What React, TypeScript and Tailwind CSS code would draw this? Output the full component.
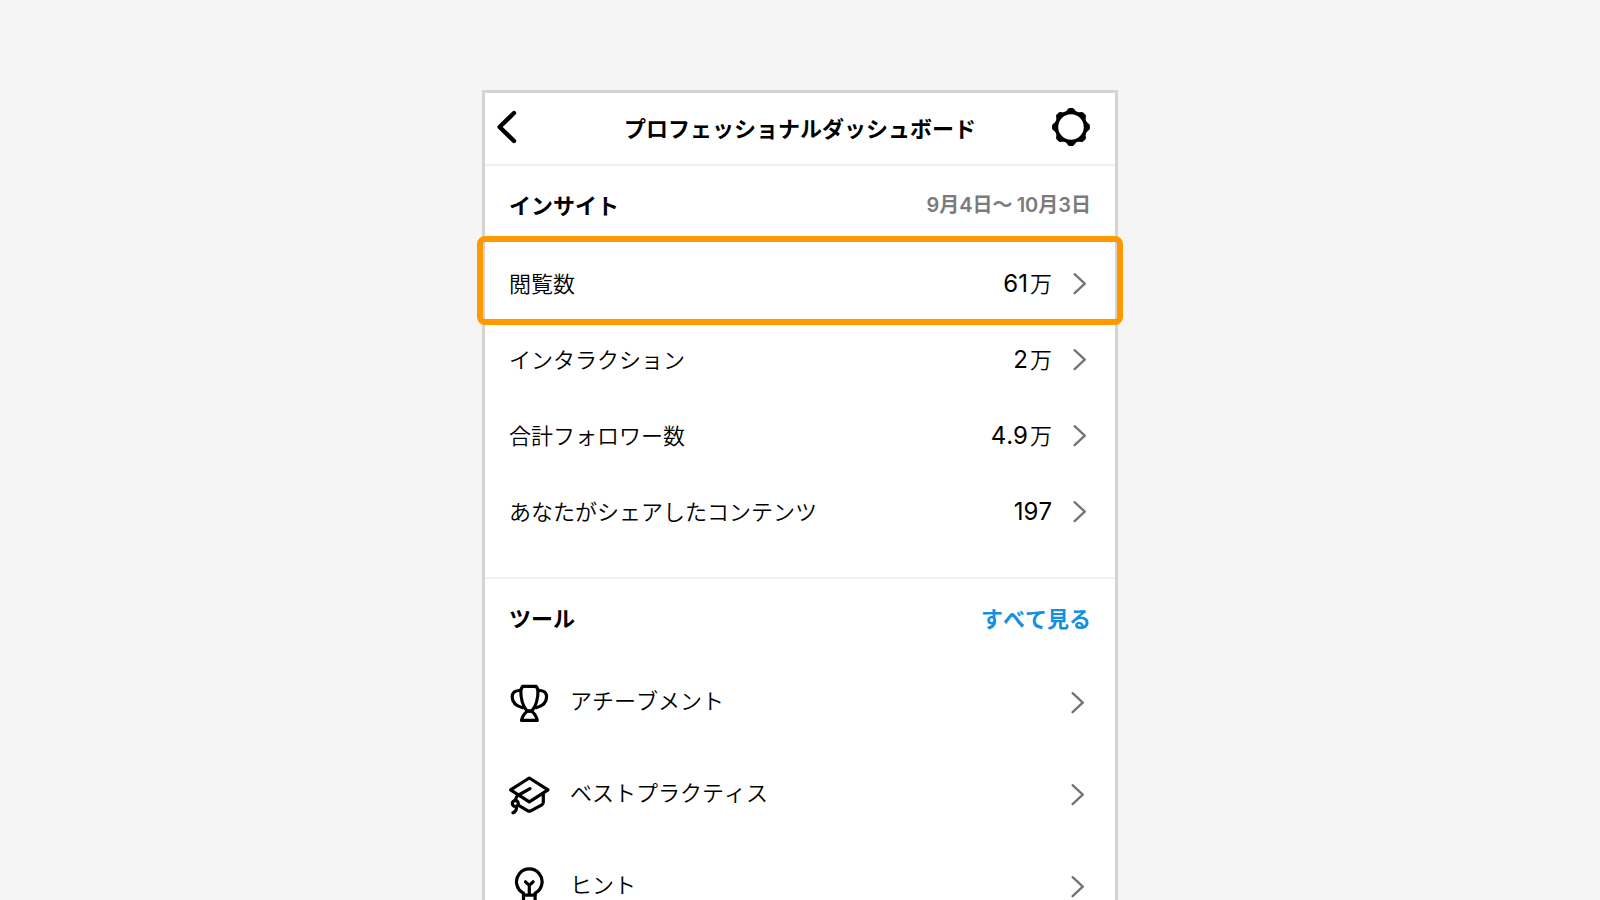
import type { ReactNode } from "react";

type Insight = {
  label: string;
  value: string;
  unit?: string;
  highlighted?: boolean;
};

type Tool = {
  label: string;
  icon: ReactNode;
};

const insights: Insight[] = [
  { label: "閲覧数", value: "61", unit: "万", highlighted: true },
  { label: "インタラクション", value: "2", unit: "万" },
  { label: "合計フォロワー数", value: "4.9", unit: "万" },
  { label: "あなたがシェアしたコンテンツ", value: "197" },
];

const tools: Tool[] = [
  { label: "アチーブメント", icon: <TrophyIcon /> },
  { label: "ベストプラクティス", icon: <CapIcon /> },
  { label: "ヒント", icon: <BulbIcon /> },
];

const gearAngles = [0, 45, 90, 135, 180, 225, 270, 315];

function BackIcon() {
  return (
    <svg viewBox="0 0 20 34" className="h-[34px] w-5" fill="none" stroke="currentColor" strokeWidth="4.4" strokeLinecap="round" strokeLinejoin="round" aria-hidden="true">
      <path d="M17 3 2.6 17 17 31" />
    </svg>
  );
}

function GearIcon() {
  return (
    <svg viewBox="0 0 40 40" className="size-10" aria-hidden="true">
      <circle cx="20" cy="20" r="14.6" fill="none" stroke="currentColor" strokeWidth="3.6" />
      {gearAngles.map((angle) => (
        <path key={angle} d="M14.6 5 16.9 2q.7-.9 1.800-.9h2.600q1.100 0 1.800.9L25.400 5z" transform={`rotate(${angle} 20 20)`} fill="currentColor" />
      ))}
    </svg>
  );
}

function ChevronIcon() {
  return (
    <svg viewBox="0 0 14 24" className="h-6 w-3.5 shrink-0 text-[#737373]" fill="none" stroke="currentColor" strokeWidth="2.3" strokeLinecap="round" strokeLinejoin="round" aria-hidden="true">
      <path d="M1.600 2.200 11.800 11.700 1.600 21.200" />
    </svg>
  );
}

function TrophyIcon() {
  return (
    <svg viewBox="0 0 40 40" className="size-10 shrink-0" fill="none" stroke="currentColor" strokeWidth="3.2" strokeLinecap="round" strokeLinejoin="round" aria-hidden="true">
      <path d="M13.600 3.400h13.600l1.800 3.200C29.200 15.500 27.200 23 22.600 28.200H18.200C13.600 23 11.600 15.500 11.800 6.600Z" />
      <path d="M11.800 7.600C6.600 6.900 3.200 9.400 3.200 13.700c0 5 3.800 9.200 10.500 11M29 7.600c5.200-.7 8.600 1.800 8.600 6.100 0 5-3.800 9.200-10.500 11" />
      <path d="M18.200 28.200c-2.800 2-4.700 4.800-5.700 9.200h15.800c-1-4.400-2.900-7.200-5.700-9.200Z" />
    </svg>
  );
}

function CapIcon() {
  return (
    <svg viewBox="0 0 40 40" className="size-10 shrink-0 overflow-visible" fill="none" stroke="currentColor" strokeWidth="3.2" strokeLinecap="round" strokeLinejoin="round" aria-hidden="true">
      <path d="M20.3 3 39 14.8 20.3 26.8 1.600 14.800Z" />
      <path d="M21 13.600 8.800 20.500q-1.800 1.200-2.300 5" />
      <path d="M34.300 18.600v8.700q0 1.600-1.400 2.500l-11.200 6q-1.400.8-2.800 0L10.500 30.800" />
      <circle cx="6.300" cy="28.600" r="3" />
      <path d="M7.600 31.800q.2 4.500-3.700 6" />
    </svg>
  );
}

function BulbIcon() {
  return (
    <svg viewBox="0 0 40 40" className="size-10 shrink-0" fill="none" stroke="currentColor" strokeWidth="3.2" strokeLinecap="round" strokeLinejoin="round" aria-hidden="true">
      <path d="M14.5 26.1a12.8 12.8 0 1 1 11.6 0v9.200q0 2.500-2.500 2.500H17q-2.500 0-2.500-2.500Z" />
      <path d="M16.500 14.800l3.800 3.600 3.800-3.600M20.300 18.400v9.400M14.500 28.100h11.600" />
    </svg>
  );
}

function InsightRow({ label, value, unit, highlighted }: Insight) {
  return (
    <li className="relative">
      <a href="#" className="flex h-[76px] items-center px-6">
        <span className="flex-1 text-[22px] font-[350]">{label}</span>
        <span className="flex items-baseline gap-0.5 text-2xl">
          {value}
          {unit ? <span className="text-[22px] font-[350]">{unit}</span> : null}
        </span>
        <span className="ml-[21px] mr-1">
          <ChevronIcon />
        </span>
      </a>
      {highlighted ? (
        <div className="pointer-events-none absolute -inset-x-2 -top-2.5 -bottom-[3px] z-10 rounded-lg border-6 border-[#ff9900]" />
      ) : null}
    </li>
  );
}

function ToolRow({ label, icon }: Tool) {
  return (
    <li>
      <a href="#" className="flex h-[92px] items-center gap-[21px] px-6">
        {icon}
        <span className="flex-1 pb-1 text-[22px] font-[350]">{label}</span>
        <span className="mr-1.5">
          <ChevronIcon />
        </span>
      </a>
    </li>
  );
}

export default function App() {
  return (
    <div className="h-screen overflow-hidden bg-[#f5f5f5] px-4 pt-[90px] font-['Inter','Noto_Sans_CJK_JP',sans-serif] text-black [font-kerning:none]">
      <main className="mx-auto max-w-[636px] border-3 border-[#d6d3d1] bg-white" lang="ja">
        <header className="flex h-[73px] items-center justify-between border-b-2 border-[#efefef] pr-6 pb-1 pl-3">
          <button type="button" aria-label="戻る" className="w-[52px]">
            <BackIcon />
          </button>
          <h1 className="pt-1.5 text-[22px] font-semibold">プロフェッショナルダッシュボード</h1>
          <button type="button" aria-label="設定">
            <GearIcon />
          </button>
        </header>

        <section className="border-b-2 border-[#efefef] pb-[27px]">
          <div className="flex h-20 items-center justify-between px-6">
            <h2 className="text-[22px] font-semibold">インサイト</h2>
            <p className="pb-0.5 text-xl font-semibold text-[#7b7b7b]">
              9月4日〜<span className="ml-1">10月3日</span>
            </p>
          </div>
          <ul>
            {insights.map((insight) => (
              <InsightRow key={insight.label} {...insight} />
            ))}
          </ul>
        </section>

        <section>
          <div className="flex h-[78px] items-center justify-between px-6 pt-0.5">
            <h2 className="text-[22px] font-semibold">ツール</h2>
            <a href="#" className="text-[22px] font-semibold text-[#1490df]">
              すべて見る
            </a>
          </div>
          <ul>
            {tools.map((tool) => (
              <ToolRow key={tool.label} {...tool} />
            ))}
          </ul>
        </section>
      </main>
    </div>
  );
}
